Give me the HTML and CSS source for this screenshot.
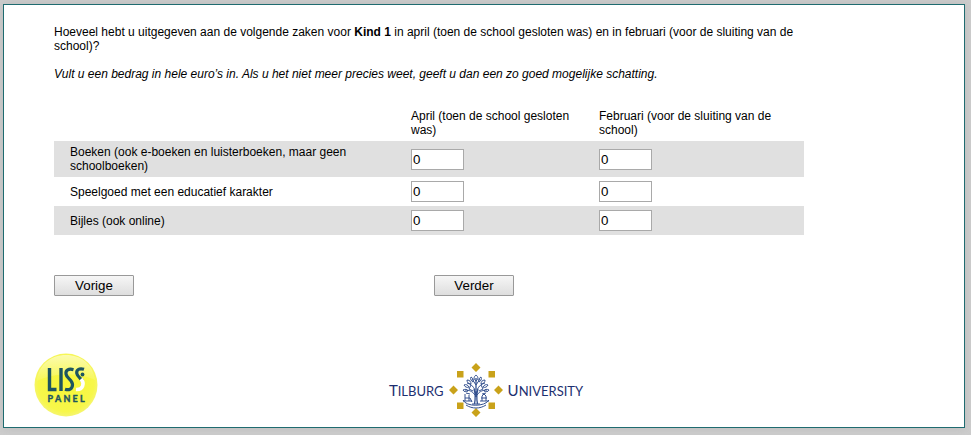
FILE: index.html
```html
<!DOCTYPE html>
<html lang="nl">
<head>
<meta charset="utf-8">
<meta name="viewport" content="width=device-width, initial-scale=1">
<title>LISS panel</title>
<link rel="stylesheet" href="styles.css">
</head>
<body>
<main class="panel">
  <form class="survey">
    <p class="question">Hoeveel hebt u uitgegeven aan de volgende zaken voor <strong>Kind 1</strong> in april (toen de school gesloten was) en in februari (voor de sluiting van de school)?</p>
    <p class="hint">Vult u een bedrag in hele euro’s in. Als u het niet meer precies weet, geeft u dan een zo goed mogelijke schatting.</p>
    <table class="amounts">
      <thead>
        <tr>
          <td class="label-col"></td>
          <th class="april-col" scope="col" id="april">April (toen de school gesloten was)</th>
          <th scope="col" id="februari">Februari (voor de sluiting van de school)</th>
        </tr>
      </thead>
      <tbody>
        <tr>
          <th scope="row" id="boeken">Boeken (ook e-boeken en luisterboeken, maar geen schoolboeken)</th>
          <td><input type="text" value="0" aria-labelledby="boeken april"></td>
          <td><input type="text" value="0" aria-labelledby="boeken februari"></td>
        </tr>
        <tr>
          <th scope="row" id="speelgoed">Speelgoed met een educatief karakter</th>
          <td><input type="text" value="0" aria-labelledby="speelgoed april"></td>
          <td><input type="text" value="0" aria-labelledby="speelgoed februari"></td>
        </tr>
        <tr>
          <th scope="row" id="bijles">Bijles (ook online)</th>
          <td><input type="text" value="0" aria-labelledby="bijles april"></td>
          <td><input type="text" value="0" aria-labelledby="bijles februari"></td>
        </tr>
      </tbody>
    </table>
    <div class="actions">
      <button type="button">Vorige</button>
      <button type="button">Verder</button>
    </div>
  </form>
  <footer class="logos">
    <svg class="liss" viewBox="0 0 64 64" role="img" aria-label="LISS panel">
      <defs>
        <radialGradient id="ball" cx="50%" cy="48%" r="52%">
          <stop offset="0" stop-color="#f6f637"/>
          <stop offset=".85" stop-color="#f7f74a"/>
          <stop offset="1" stop-color="#f5f570"/>
        </radialGradient>
        <linearGradient id="shine" x1="0" y1="0" x2="0" y2="1">
          <stop offset="0" stop-color="#fff" stop-opacity=".55"/>
          <stop offset="1" stop-color="#fff" stop-opacity=".08"/>
        </linearGradient>
      </defs>
      <circle cx="32" cy="32" r="31.5" fill="url(#ball)"/>
      <path d="M3 28C4 12 17 2 32 2s27 9 29 25c-14-7-40-8-58 1z" fill="url(#shine)"/>
      <path d="M15.500 15v21.500h7M27 15v23" fill="none" stroke="#1d5560" stroke-width="3.400"/>
      <path d="M39.500 16.700c-5-1.500-8 .8-7.500 4.300.5 4.500 6.500 5.500 6.500 10.500 0 4.500-3.500 6-7.500 4.700" fill="none" stroke="#1d5560" stroke-width="3.200"/>
      <path d="M50 16.300c-5-1.500-7.800.7-7.200 4.200.5 3 4 5 5.700 7.500" fill="none" stroke="#1d5560" stroke-width="3.200"/>
      <path d="M47 26c4 4.500 2 11-5 10.500" fill="none" stroke="#fff" stroke-width="3.600"/>
      <circle cx="48.500" cy="21.500" r="1.900" fill="#1d5560"/>
      <g class="liss-name">
        <text x="13.500" y="49">P</text>
        <text x="21" y="49">A</text>
        <text x="29.500" y="49">N</text>
        <text x="38.500" y="49">E</text>
        <text x="46" y="49">L</text>
      </g>
    </svg>
    <div class="tilburg">
      <span class="word">T<small>ILBURG</small></span>
      <svg class="crest" viewBox="0 0 54 54" aria-hidden="true">
        <g fill="#c9a21a">
          <path d="M27 0l4.500 4.500L27 9l-4.500-4.500zM27 45l4.500 4.500L27 54l-4.500-4.500zM4.500 22.500L9 27l-4.500 4.500L0 27zM49.500 22.500L54 27l-4.500 4.500L45 27z"/>
          <path d="M8 8h6.500v6.500H8zM39.500 8H46v6.500h-6.500zM8 39.500h6.500V46H8zM39.500 39.500H46V46h-6.500z"/>
        </g>
        <g fill="none" stroke="#34518f" stroke-width="1">
          <path d="M25.500 41c1-5 1-10-.5-15M28.500 41c-1-5-1-10 .5-15M27 34V15" stroke-width="1.300"/>
          <path d="M26 32c-3-4-6-5-10-5M28 32c3-4 6-5 10-5M26 27c-2-4-4-6-8-7M28 27c2-4 4-6 8-7M27 22l-4-6M27 22l4-6"/>
          <path d="M27 12c-2.500 2-2.500 4 0 6 2.500-2 2.500-4 0-6zM22 14c-1 2 0 4 2 5 1-2 0-4-2-5zM32 14c1 2 0 4-2 5-1-2 0-4 2-5zM18 17c0 2 1 4 4 4 0-2-1-4-4-4zM36 17c0 2-1 4-4 4 0-2 1-4 4-4zM15 22c1 2 3 3 5 2-1-2-3-3-5-2zM39 22c-1 2-3 3-5 2 1-2 3-3 5-2zM14 27c1 2 3 2 5 1-1-2-3-2-5-1zM40 27c-1 2-3 2-5 1 1-2 3-2 5-1zM22 22l-2 4 4 2M32 22l2 4-4 2M17 30l4 1M37 30l-4 1"/>
          <path d="M16 31v7M20 32v6M16 35h5M21 35l2 4M33 38v-5l2-2 2 2v5M32 35h6M14 38h9M31 38h9"/>
          <path d="M14 37c3 7 22 7 26 0M17 42c6 4 14 4 20 0M23 41h8"/>
        </g>
      </svg>
      <span class="word">U<small>NIVERSITY</small></span>
    </div>
  </footer>
</main>
</body>
</html>
```
FILE: styles.css
```css
* {
  box-sizing: border-box;
}

body {
  margin: 0;
  padding: 4px 6px 7px 3px;
  background: #ccc;
  color: #000;
  font: 12px/14px "Liberation Sans", Arial, sans-serif;
}

.panel {
  padding: 20px 26px 10px 30px;
  border: 1px solid #1f6b70;
  background: #fff;
  box-shadow: 0 0 8px #bbb;
}

.survey {
  max-width: 770px;
  padding: 0 0 0 20px;
}

p {
  margin: 0 0 14px;
}

.hint {
  margin-bottom: 28px;
  font-style: italic;
}

.amounts {
  width: 100%;
  border-collapse: collapse;
  table-layout: fixed;
}

.label-col {
  width: 356px;
}

.april-col {
  width: 188px;
}

th,
td {
  padding: 4px 16px 4px 1px;
  font-weight: normal;
  text-align: left;
  vertical-align: middle;
}

thead th {
  padding-top: 0;
}

tbody th {
  padding-left: 16px;
  padding-right: 50px;
}

tbody tr:nth-child(odd) {
  background: #e0e0e0;
}

input {
  display: block;
  width: 53px;
  height: 21px;
  padding: 1px;
  border: 1px solid #a9a9a9;
  background: #fff;
  color: #000;
  font-family: "Liberation Sans", Arial, sans-serif;
}

.actions {
  display: flex;
  gap: 300px;
  margin-top: 40px;
}

button {
  width: 80px;
  height: 21px;
  padding: 0;
  border: 1px solid #999;
  border-radius: 1px;
  background: linear-gradient(#f6f6f6, #dedede);
  color: #000;
  font-family: "Liberation Sans", Arial, sans-serif;
}

.logos {
  display: grid;
  grid-template-columns: 1fr auto 1fr;
  align-items: center;
  margin-top: 57px;
}

.liss {
  width: 64px;
  height: 64px;
}

.liss-name {
  fill: #1d5560;
  stroke: #1d5560;
  stroke-width: 0.4;
  font: bold 9px Lato, sans-serif;
}

.tilburg {
  display: flex;
  align-items: center;
  gap: 5px;
  padding-top: 10px;
}

.crest {
  width: 54px;
  height: 54px;
}

.word {
  color: #1c2f70;
  font: 15px/20px Lato, sans-serif;
}

.word small {
  font-size: 13px;
}
```
